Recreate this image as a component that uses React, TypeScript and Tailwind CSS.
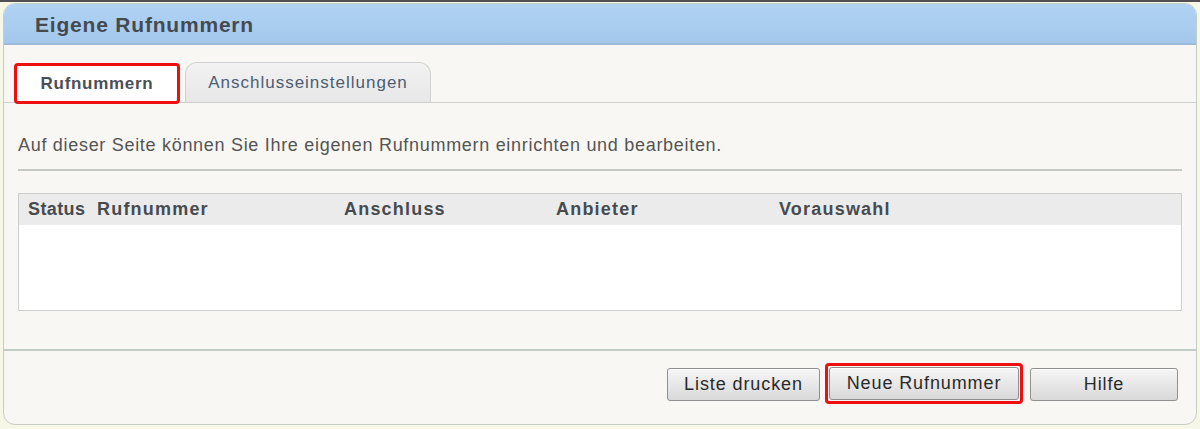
import React from 'react';

const columns = [
  { label: 'Status', w: 'w-[69px] tracking-[0.4px]' },
  { label: 'Rufnummer', w: 'w-[247px] tracking-[1.2px]' },
  { label: 'Anschluss', w: 'w-[212px] tracking-[1.2px]' },
  { label: 'Anbieter', w: 'w-[223px] tracking-[1.2px]' },
  { label: 'Vorauswahl', w: 'flex-1 tracking-[1.2px]' },
];

function Button({ children, className = '' }: { children: React.ReactNode; className?: string }) {
  return (
    <button
      className={`h-[33px] rounded-[3px] border border-[#8f8f8f] bg-gradient-to-b from-[#f6f6f6] to-[#d9d9d9] text-[18px] tracking-[0.9px] text-[#2a2a2a] shadow-[inset_0_1px_0_#fff] ${className}`}
    >
      {children}
    </button>
  );
}

export default function App() {
  return (
    <div
      className="w-[1200px] h-[429px] bg-[#f7f7e8] overflow-hidden"
      style={{ fontFamily: '"Liberation Sans", Arial, sans-serif' }}
    >
      <div className="h-[2px] bg-[#505050]" />
      <div className="mx-[3px] mt-[1px] h-[422px] rounded-[12px] border border-[#c4cec6] bg-[#f8f7f3] flex flex-col overflow-hidden">
        {/* header */}
        <div className="h-[41px] shrink-0 bg-gradient-to-b from-[#b0d3f4] to-[#a4c8ec] border-b-2 border-[#9bbbd9] flex items-center pl-[31px]">
          <h1 className="text-[21px] tracking-[0.8px] font-bold text-[#454a50] pt-[2px]">Eigene Rufnummern</h1>
        </div>

        {/* tabs */}
        <div className="h-[58px] shrink-0 flex items-end px-[10px] border-b border-[#cfcfcf]">
          <div className="w-[166px] h-[41px] mb-[-2px] rounded-[4px] border-[3px] border-[#ee1010] bg-white flex items-center justify-center">
            <span className="text-[17px] tracking-[0.7px] font-bold text-[#4a4f56] pt-[1px]">Rufnummern</span>
          </div>
          <div className="ml-[5px] w-[246px] h-[40px] rounded-t-[12px] border border-b-0 border-[#d2d2d2] bg-gradient-to-b from-[#f2f2f2] to-[#e7e7e7] flex items-center justify-center">
            <span className="text-[17px] tracking-[1px] text-[#4d5d72] pt-[1px]">Anschlusseinstellungen</span>
          </div>
        </div>

        {/* description */}
        <div className="px-[14px]">
          <p className="mt-[32px] text-[18px] tracking-[0.7px] leading-[20px] text-[#555]">
            Auf dieser Seite können Sie Ihre eigenen Rufnummern einrichten und bearbeiten.
          </p>
          <div className="mt-[14px] h-[2px] bg-[#c4c9c6]" />

          {/* table */}
          <div className="mt-[22px] h-[118px] border border-[#cdcdcd] bg-white">
            <div className="h-[31px] bg-[#ebebeb] flex items-center pl-[9px]">
              {columns.map((c) => (
                <div key={c.label} className={`${c.w} text-[18px] font-bold text-[#474b50]`}>
                  {c.label}
                </div>
              ))}
            </div>
          </div>
        </div>

        {/* footer */}
        <div className="mt-[38px] h-[2px] bg-[#c2ccc6]" />
        <div className="flex-1 flex items-start justify-end pr-[18px] pt-[12px] gap-[5px]">
          <Button className="mt-[5px] w-[153px]">Liste drucken</Button>
          <div className="rounded-[4px] border-[3px] border-[#ee1010] p-[1px]">
            <Button className="w-[190px]">Neue Rufnummer</Button>
          </div>
          <Button className="mt-[5px] ml-[2px] w-[148px]">Hilfe</Button>
        </div>
      </div>
    </div>
  );
}
